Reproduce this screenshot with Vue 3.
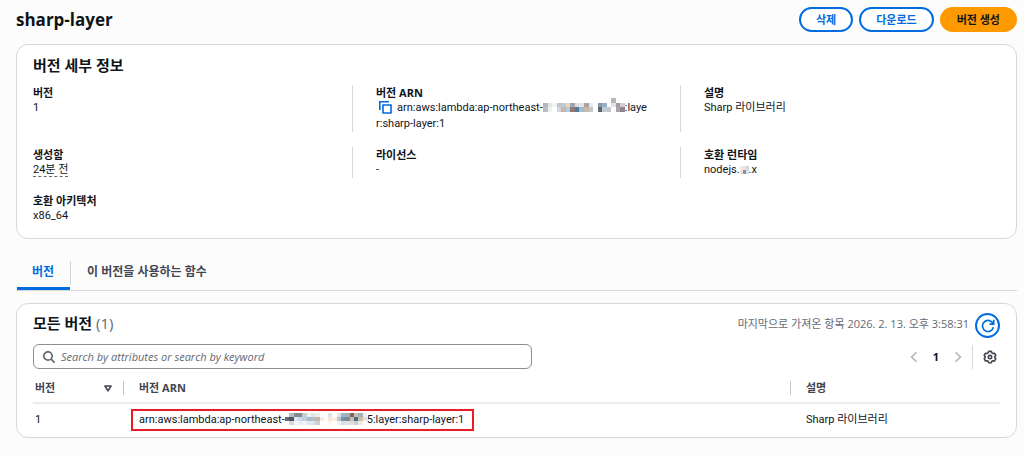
<script setup>
import { ref } from 'vue'

const search = ref('')

const buildMask = (rows) =>
  rows.flatMap((row, y) => row.map((fill, x) => ({ x: x * 4, y: y * 4, fill }))).filter((c) => c.fill)

const n = null
const detailMask = buildMask([
  [n, n, n, n, n, n, n, n, n, n, n, n, n, n, n, '#b4b7ba', n, n],
  ['#b5b8bf', '#e3e3e3', '#f3f3f3', '#bdc4cc', '#b9cbd9', '#ead6c0', '#a3a4aa', '#d5e0ea', '#ebe4dc', '#a9a4a3', '#e6e8eb', n, '#8c97a6', '#98aec4', n, '#dfe4e9', '#a39c9c', '#d5cdd2'],
  ['#b9bec6', '#f1f1f1', n, '#cfd6dc', '#c7b7a4', '#b3cbe0', '#8c7b78', '#527a9c', '#a0bcd2', '#c9b9aa', '#c5c9cf', n, '#596675', '#c3cbd4', '#c4c8cd', n, '#a8a4aa', '#8e858f'],
])
const tableMask = buildMask([
  [n, '#b6bdc5', '#85888d', '#7b8b97', '#c5ccd2', '#eff1f3', '#d8e4ef', '#f3ebe1', n, n, '#d3e6f4', n, '#dfe3e8', '#a3b4c6', '#a6b0ba', '#74696a', '#cdbfb0', '#a2afba', '#eeeeee'],
  ['#626b77', '#4b5260', '#dfe5ea', '#c4dcec', '#c4ccd5', '#a5bccc', '#b0bfc8', '#c6b9ac', '#f7ede1', n, '#fae6d1', '#fbeee0', '#bac6d1', '#7a90ab', '#7b889d', '#cfbba8', '#4b6b86', '#d2bda6', '#dfe3e8'],
  [n, '#d6d8dc', '#f5f5f5', '#e5eef4', '#eff3f6', '#e0e6eb', '#dde6ec', '#d2cfcb', n, n, '#fff4ea', n, '#eef1f4', '#d8dde3', '#e0e4e8', '#e3dbd4', '#c8d0d8', '#efe9e3', n],
])
const runtimeMask = buildMask([
  ['#f7e6d9', '#e5e3e2', '#d5d8dd'],
  ['#f5e1d2', '#8a8f99', '#dce0e6'],
])
</script>

<template>
  <main class="page">
    <header class="page-header">
      <h1>sharp-layer</h1>
      <div class="actions">
        <button type="button" class="button">삭제</button>
        <button type="button" class="button">다운로드</button>
        <button type="button" class="button primary">버전 생성</button>
      </div>
    </header>

    <section class="card details">
      <h2>버전 세부 정보</h2>
      <dl class="grid">
        <div class="field">
          <dt>버전</dt>
          <dd>1</dd>
        </div>
        <div class="field divided">
          <dt>버전 ARN</dt>
          <dd class="arn">
            <button type="button" class="copy" aria-label="복사">
              <svg width="14" height="14" viewBox="0 0 14 14" fill="none" stroke="#006ce0" stroke-width="1.6">
                <path d="M5 5h8v8H5zM1.8 10V1.8H11" />
              </svg>
            </button>arn:aws:lambda:ap-northeast-<svg class="mask" width="82" height="14" viewBox="0 0 72 12" shape-rendering="crispEdges" aria-hidden="true">
              <rect v-for="(c, i) in detailMask" :key="i" :x="c.x" :y="c.y" width="4" height="4" :fill="c.fill" />
            </svg>:layer:sharp-layer:1
          </dd>
        </div>
        <div class="field divided">
          <dt>설명</dt>
          <dd>Sharp 라이브러리</dd>
        </div>
        <div class="field">
          <dt>생성함</dt>
          <dd><span class="relative-time">24분 전</span></dd>
        </div>
        <div class="field divided">
          <dt>라이선스</dt>
          <dd>-</dd>
        </div>
        <div class="field divided">
          <dt>호환 런타임</dt>
          <dd>nodejs.<svg class="mask" width="9" height="8" viewBox="0 0 12 8" preserveAspectRatio="none" shape-rendering="crispEdges" aria-hidden="true">
            <rect v-for="(c, i) in runtimeMask" :key="i" :x="c.x" :y="c.y" width="4" height="4" :fill="c.fill" />
          </svg>.x</dd>
        </div>
        <div class="field">
          <dt>호환 아키텍처</dt>
          <dd>x86_64</dd>
        </div>
      </dl>
    </section>

    <div class="tabs" role="tablist">
      <button type="button" class="tab active" role="tab" aria-selected="true">버전</button>
      <button type="button" class="tab" role="tab" aria-selected="false">이 버전을 사용하는 함수</button>
    </div>

    <section class="card versions">
      <div class="versions-header">
        <h2>모든 버전 <span class="count">(1)</span></h2>
        <div class="fetched">
          <span>마지막으로 가져온 항목 2026. 2. 13. 오후 3:58:31</span>
          <button type="button" class="refresh" aria-label="새로 고침">
            <svg width="14" height="14" viewBox="0 0 14 14" fill="none" stroke="currentColor" stroke-width="1.7">
              <path d="M12.4 8.2A5.5 5.5 0 1 1 11.4 3.6L12.6 5" />
              <path d="M12.7.8v4.3H8.4" />
            </svg>
          </button>
        </div>
      </div>

      <div class="toolbar">
        <label class="search">
          <svg width="14" height="14" viewBox="0 0 14 14" fill="none" stroke="#656871" stroke-width="1.7" aria-hidden="true">
            <circle cx="6" cy="6" r="4.2" />
            <path d="M9.1 9.1l3.5 3.5" />
          </svg>
          <input v-model="search" type="text" aria-label="Search versions" placeholder="Search by attributes or search by keyword" />
        </label>
        <div class="pager">
          <button type="button" class="icon-button arrow" aria-label="이전 페이지">
            <svg width="8" height="12" viewBox="0 0 8 12" fill="none" stroke="currentColor" stroke-width="1.6"><path d="M6.5 1.2L1.6 6l4.9 4.8" /></svg>
          </button>
          <button type="button" class="icon-button current">1</button>
          <button type="button" class="icon-button arrow" aria-label="다음 페이지">
            <svg width="8" height="12" viewBox="0 0 8 12" fill="none" stroke="currentColor" stroke-width="1.6"><path d="M1.5 1.2L6.4 6l-4.9 4.8" /></svg>
          </button>
          <button type="button" class="icon-button settings" aria-label="기본 설정">
            <svg width="14" height="14" viewBox="0 0 14 14" fill="none" stroke="currentColor" stroke-width="1.6" stroke-linejoin="round">
              <path d="M5.7 1.4h2.6l.6 1.5 1 .6 1.6-.3 1.3 2.3-1 1.2v.8l1 1.2-1.3 2.3-1.6-.3-1 .6-.6 1.4H5.7l-.6-1.4-1-.6-1.6.3-1.3-2.3 1-1.2v-.8l-1-1.2 1.3-2.3 1.6.3 1-.6z" />
              <circle cx="7" cy="7.1" r="1.7" />
            </svg>
          </button>
        </div>
      </div>

      <table>
        <thead>
          <tr>
            <th class="col-version" scope="col">
              <span class="sortable">버전
                <svg width="8" height="7" viewBox="0 0 8 7" fill="none" stroke="#424650" stroke-width="1.6" stroke-linejoin="round" aria-hidden="true"><path d="M1 1h6L4 5.8z" /></svg>
              </span>
            </th>
            <th scope="col">버전 ARN</th>
            <th class="col-description" scope="col">설명</th>
          </tr>
        </thead>
        <tbody>
          <tr>
            <td>1</td>
            <td>
              <span class="highlight">arn:aws:lambda:ap-northeast-<svg class="mask" width="82" height="12" viewBox="0 0 76 12" preserveAspectRatio="none" shape-rendering="crispEdges" aria-hidden="true">
                <rect v-for="(c, i) in tableMask" :key="i" :x="c.x" :y="c.y" width="4" height="4" :fill="c.fill" />
              </svg>5:layer:sharp-layer:1</span>
            </td>
            <td>Sharp 라이브러리</td>
          </tr>
        </tbody>
      </table>
    </section>
  </main>
</template>

<style>
body {
  margin: 0;
  background: #fcfcfd;
}
</style>

<style scoped>
.page {
  box-sizing: border-box;
  padding: 7px 7px 16px 16px;
  color: #0f141a;
  font: 11px/16px "Open Sans", "Noto Sans CJK KR", sans-serif;
}
h1, h2, dl, dd {
  margin: 0;
}
dd, td {
  font-family: Roboto, "Noto Sans CJK KR", sans-serif;
}
button {
  padding: 0;
  border: 0;
  background: none;
  color: inherit;
  font: inherit;
}
svg {
  display: block;
}
.page-header, .versions-header, .toolbar {
  display: flex;
  align-items: center;
  justify-content: space-between;
}
h1 {
  font-size: 17px;
  line-height: 24px;
}
.actions {
  display: flex;
  gap: 6px;
}
.button {
  box-sizing: border-box;
  height: 25px;
  padding: 0 15px;
  border: 2px solid #006ce0;
  border-radius: 13px;
  background: #fff;
  color: #006ce0;
  font-weight: 700;
  line-height: 20px;
}
.primary {
  border-color: #f90;
  background: #f90;
  color: #0f141a;
}
.card {
  border: 1px solid #d5d7dc;
  border-radius: 12px;
  background: #fff;
}
.details {
  margin-top: 12px;
  padding: 10px 16px 14px;
}
h2 {
  font-size: 15px;
  line-height: 20px;
}
.grid {
  display: grid;
  grid-template-columns: 319fr 328fr 320fr;
  gap: 15px 0;
  margin-top: 10px;
}
.divided {
  padding: 0 27px 0 23px;
  border-left: 1px solid #d5d7dc;
}
dt {
  font-weight: 700;
  line-height: 15px;
}
.arn {
  word-break: break-all;
}
.copy {
  display: inline-block;
  margin: 0 5px 0 2px;
  vertical-align: -3px;
}
.mask {
  display: inline-block;
  margin: -4px 0;
  vertical-align: 3px;
}
.relative-time {
  border-bottom: 1px dashed #656871;
}
.tabs {
  display: flex;
  margin-top: 17px;
  padding-left: 1px;
  border-bottom: 1px solid #d5d7dc;
}
.tab {
  position: relative;
  padding: 6px 16px 5px 17px;
  border-bottom: 3px solid transparent;
  color: #424650;
  font-size: 12px;
  font-weight: 700;
  line-height: 20px;
}
.tab + .tab::before {
  content: "";
  position: absolute;
  top: 5px;
  bottom: 2px;
  left: 0;
  border-left: 1px solid #d5d7dc;
}
.active {
  padding-left: 15px;
  border-color: #006ce0;
  color: #006ce0;
}
.versions {
  margin-top: 12px;
  padding: 9px 16px 0;
}
.versions-header {
  align-items: flex-start;
}
.count {
  color: #656871;
  font-weight: 400;
}
.fetched {
  display: flex;
  align-items: flex-start;
  gap: 6px;
  color: #656871;
  line-height: 22px;
}
.refresh {
  display: grid;
  box-sizing: border-box;
  width: 25px;
  height: 25px;
  place-items: center;
  border: 2px solid #006ce0;
  border-radius: 50%;
  color: #006ce0;
}
.toolbar {
  margin-top: 6px;
}
.search {
  display: flex;
  box-sizing: border-box;
  flex: 0 1 499px;
  align-items: center;
  gap: 5px;
  height: 25px;
  padding: 0 8px;
  border: 1px solid #8c8c94;
  border-radius: 6px;
}
input {
  flex: 1;
  min-width: 0;
  padding: 0;
  border: 0;
  outline: 0;
  background: none;
  color: inherit;
  font: inherit;
}
input::placeholder {
  color: #656871;
  font-style: italic;
  opacity: 1;
}
.pager {
  display: flex;
  align-items: center;
}
.icon-button {
  display: grid;
  width: 22px;
  height: 24px;
  place-items: center;
}
.arrow {
  color: #b4b4bb;
}
.current {
  font-weight: 700;
}
.settings {
  box-sizing: border-box;
  width: 28px;
  margin-left: 3px;
  padding-left: 6px;
  border-left: 1px solid #d5d7dc;
  color: #424650;
}
table {
  width: 100%;
  border-collapse: collapse;
  table-layout: fixed;
}
th, td {
  padding: 0 16px;
  text-align: left;
}
th {
  position: relative;
  height: 28px;
  padding-top: 5px;
  border-bottom: 2px solid #ebebf0;
  color: #424650;
}
th + th::before {
  content: "";
  position: absolute;
  top: 12px;
  bottom: 7px;
  left: 0;
  border-left: 1px solid #c6c6cd;
}
td {
  height: 31px;
  padding-bottom: 2px;
}
th:first-child, td:first-child {
  padding-left: 2px;
}
.col-version {
  width: 72px;
}
.col-description {
  width: 178px;
}
.sortable {
  display: flex;
  align-items: center;
  justify-content: space-between;
}
.sortable svg {
  margin-right: -5px;
}
.highlight {
  display: inline-block;
  margin: 0 -8px;
  padding: 1px 8px 1px 6px;
  border: 2px solid #ec1c24;
}
.highlight .mask {
  vertical-align: 2px;
}
</style>
